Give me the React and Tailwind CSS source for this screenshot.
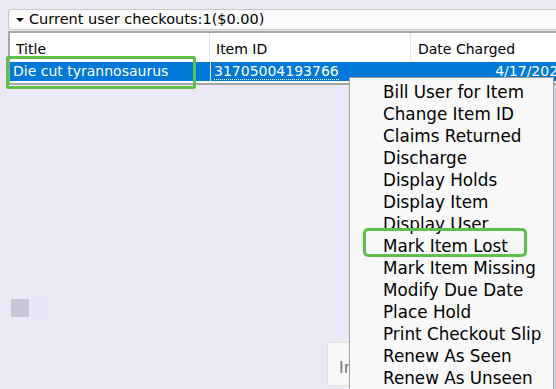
import React from "react";

const items = [
  "Bill User for Item",
  "Change Item ID",
  "Claims Returned",
  "Discharge",
  "Display Holds",
  "Display Item",
  "Display User",
  "Mark Item Lost",
  "Mark Item Missing",
  "Modify Due Date",
  "Place Hold",
  "Print Checkout Slip",
  "Renew As Seen",
  "Renew As Unseen",
];

export default function App() {
  return (
    <div
      className="relative w-[556px] h-[389px] overflow-hidden bg-[#ede8f5] text-[#000]"
      style={{ fontFamily: '"DejaVu Sans", Verdana, sans-serif' }}
    >
      <div className="pt-[9px] pl-[8px] flex flex-col">
        {/* collapsible header */}
        <div className="h-[21px] border border-r-0 border-[#c8c8c8] rounded-l-[3px] bg-[#fbfbfb] flex items-center pl-[7px] gap-[5px]">
          <svg width="8" height="6" viewBox="0 0 8 6">
            <path d="M0 1 L8 1 L4 5 Z" fill="#111" />
          </svg>
          <span className="text-[14.5px] leading-none">Current user checkouts:1($0.00)</span>
        </div>
        {/* table */}
        <div className="mt-[1px] h-[54px] border-[2px] border-r-0 border-[#a7a7a7] bg-white flex flex-col">
          <div className="h-[27px] flex items-start text-[14px] leading-[17px]">
            <div className="w-[200px] pl-[6px] pt-[8px] border-r border-[#e5e5e5] h-full">Title</div>
            <div className="w-[201px] pl-[6px] pt-[8px] border-r border-[#e5e5e5] h-full">Item ID</div>
            <div className="flex-1 pl-[7px] pt-[8px] h-full whitespace-nowrap">Date Charged</div>
          </div>
          <div className="mt-[2px] h-[19px] bg-[#0078d7] text-white text-[14px] flex items-center">
            <div className="w-[200px] pl-[3px] whitespace-nowrap">Die cut tyrannosaurus</div>
            <div className="w-[201px] h-full pl-[3px] border-l border-[#e5e5e5] flex items-center">
              <span className="border-b border-dotted border-white leading-[16px]">31705004193766</span>
            </div>
            <div className="flex-1 whitespace-nowrap flex justify-end">
              <span className="-mr-[11px]">4/17/2023</span>
            </div>
          </div>
        </div>
        {/* bottom area */}
        <div className="flex mt-[214px] ml-[3px]">
          <div className="w-[18px] h-[18px] bg-[#c8c5d6]" />
          <div className="w-[17px] h-[18px] bg-[#eae6f7]" />
        </div>
      </div>

      {/* partial button behind the menu */}
      <div className="absolute left-[327px] top-[342px] w-[40px] h-[44px] border border-[#e2e2e2] rounded-[3px] bg-[#f8f8f8] flex items-end pb-[5px] pl-[11px] text-[16px] text-[#777]">
        In
      </div>

      {/* green highlight around title cell */}
      <div className="absolute left-[6px] top-[56px] w-[190px] h-[33px] border-[3px] border-[#5cc04a] rounded-[2px]" />

      {/* context menu */}
      <div className="absolute left-[349px] top-[77px] w-[205px] h-[320px] bg-[#f9f9f9] border border-[#a0a0a0] shadow-[2px_2px_3px_rgba(0,0,0,0.15)] pt-[3px] flex flex-col">
        {items.map((t) => (
          <div key={t} className="h-[22px] pl-[33px] pt-[1px] flex items-center text-[16.8px] text-[#000] whitespace-nowrap">
            {t}
          </div>
        ))}
      </div>

      {/* green highlight around Mark Item Lost */}
      <div className="absolute left-[363px] top-[228px] w-[164px] h-[29px] border-[3px] border-[#5cc04a] rounded-[5px]" />
    </div>
  );
}
